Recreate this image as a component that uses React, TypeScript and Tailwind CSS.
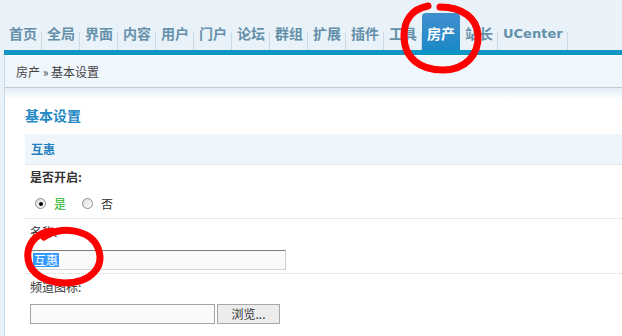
import React from "react";

const navItems = ["首页", "全局", "界面", "内容", "用户", "门户", "论坛", "群组", "扩展", "插件", "工具"];

function Sep() {
  return <div className="w-px h-[18px] bg-[#cbdae5] mt-[3px]" />;
}

function NavItem({ label }: { label: string }) {
  return (
    <div className="h-[37px] flex items-center pt-[3px] pl-[5px] pr-[4px] text-[14px] font-bold text-[#6590a9] leading-none">
      {label}
    </div>
  );
}

function Radio({ checked }: { checked?: boolean }) {
  return (
    <span className="w-[11px] h-[11px] rounded-full border border-[#8d8d8d] bg-gradient-to-br from-[#dcdcdc] to-white flex items-center justify-center">
      {checked && <span className="w-[4px] h-[4px] rounded-full bg-black" />}
    </span>
  );
}

export default function App() {
  const font = { fontFamily: '"Noto Sans CJK SC", "Noto Sans", sans-serif' };
  return (
    <div className="relative w-[622px] h-[336px] overflow-hidden bg-[#e9f2f9]" style={font}>
      {/* nav */}
      <div className="h-[50px] flex items-end pl-[4px]">
        {navItems.map((n) => (
          <React.Fragment key={n}>
            <NavItem label={n} />
            <Sep />
          </React.Fragment>
        ))}
        <div className="h-[37px] w-[38px] flex items-center justify-center pt-[3px] rounded-t-[4px] bg-gradient-to-b from-[#3f8fce] to-[#1a89c7] text-white text-[14px] font-bold leading-none">
          房产
        </div>
        <NavItem label="站长" />
        <Sep />
        <div className="h-[37px] flex items-center pt-[3px] pl-[5px] pr-[4px] text-[14px] font-bold text-[#6590a9] leading-none" style={{ fontFamily: '"DejaVu Sans", sans-serif', fontSize: 13 }}>
          UCenter
        </div>
        <Sep />
      </div>
      <div className="ml-[4px] h-[5px] bg-[#0f94c6]" />
      <div className="ml-[4px] border-l border-[#c6dae9] bg-white h-[300px]">
        {/* breadcrumb */}
        <div className="h-[33px] border-t border-white border-b border-b-[#c2ccd4] bg-[#f0f7fc] flex items-center pl-[11px] text-[12px] text-[#444]">
          房产 » 基本设置
        </div>
        <div className="h-[12px] bg-gradient-to-b from-[#e4eef6] to-white" />
        <div className="pl-[20px]">
          <div className="h-[30px] flex items-center text-[14px] font-bold text-[#2389c4] mb-[4px]">基本设置</div>
          <div className="h-[31px] bg-[#eef5fb] border-b border-dotted border-[#d6dde3] flex items-center pl-[6px] text-[12px] font-bold text-[#1f80bf]">
            互惠
          </div>
          <div className="h-[24px] flex items-center pl-[5px] text-[12px] font-bold text-[#333]">是否开启:</div>
          <div className="h-[30px] border-b border-dotted border-[#cfcfcf] flex items-center pl-[10px] text-[12px]">
            <Radio checked />
            <span className="ml-[8px] text-[#22b422]">是</span>
            <span className="ml-[16px]"><Radio /></span>
            <span className="ml-[8px] text-[#333]">否</span>
          </div>
          <div className="h-[26px] flex items-center pl-[5px] text-[12px] text-[#333]">名称:</div>
          <div className="h-[29px] pl-[5px] pt-[5px] border-b border-dotted border-[#cfcfcf]">
            <div className="w-[256px] h-[20px] bg-[#fafafa] border border-t-[#7c7c7c] border-l-[#9a9a9a] border-r-[#cccccc] border-b-[#d4d4d4] flex items-center pl-[2px]">
              <span className="bg-[#3399ff] text-white text-[12px] leading-[14px] px-[1px]">互惠</span>
            </div>
          </div>
          <div className="h-[26px] flex items-center pl-[5px] text-[12px] text-[#333]">频道图标:</div>
          <div className="pl-[5px] pt-[4px] flex gap-[2px]">
            <div className="w-[185px] h-[20px] bg-[#fafafa] border border-[#a3a3a3]" />
            <div className="w-[63px] h-[20px] bg-[#ececec] border border-[#a8a8a8] flex items-center justify-center text-[12px] text-[#333]">
              浏览...
            </div>
          </div>
        </div>
      </div>
      {/* red annotations */}
      <svg className="absolute inset-0 pointer-events-none" width="622" height="336">
        <path
          d="M440 7 C462 7, 477 18, 478 35 C479 55, 465 70, 443 70 C420 70, 404 58, 404 36 C404 20, 412 9, 428 6"
          fill="none"
          stroke="#ff0000"
          strokeWidth="7"
          strokeLinecap="round"
        />
        <path
          d="M44 237 C58 226, 90 228, 98 248 C105 266, 92 283, 64 283 C38 282, 26 268, 28 252 C30 240, 38 233, 52 231"
          fill="none"
          stroke="#ff0000"
          strokeWidth="7"
          strokeLinecap="round"
        />
      </svg>
    </div>
  );
}
